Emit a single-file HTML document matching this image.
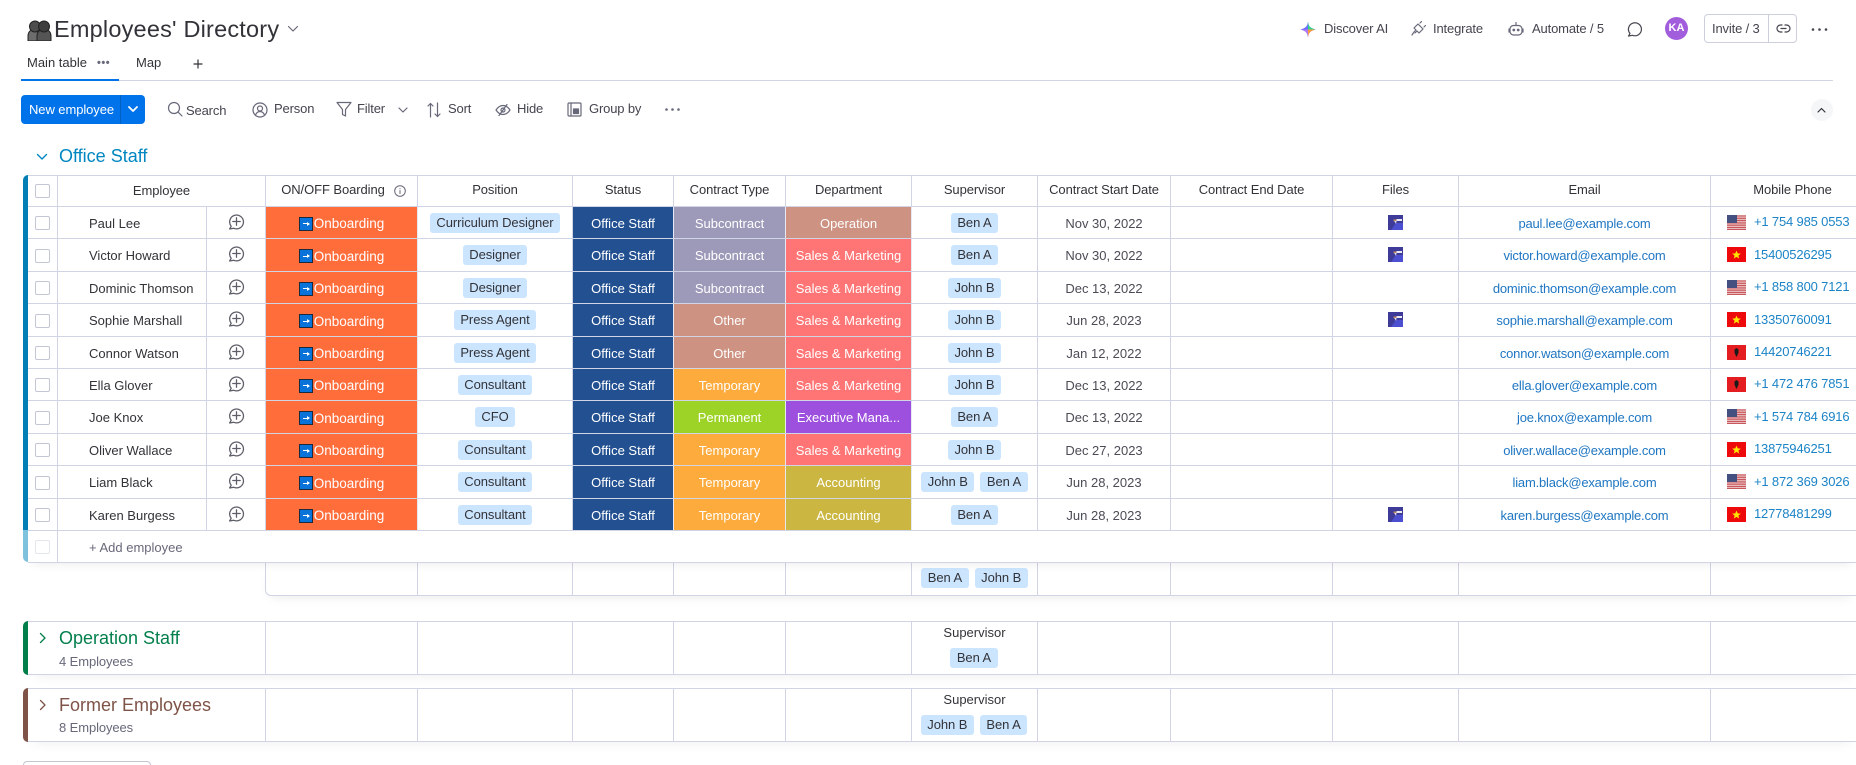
<!DOCTYPE html>
<html><head><meta charset="utf-8"><title>Employees' Directory</title>
<style>
*{box-sizing:border-box;margin:0;padding:0}
html,body{width:1856px;height:765px;overflow:hidden;background:#fff}
body{position:relative;font-family:"Liberation Sans",sans-serif;font-size:13px;color:#323338}
.t{position:absolute;white-space:nowrap;line-height:16px}
.tb{letter-spacing:-.15px;color:#44454f}
svg.i{position:absolute;fill:none;stroke:#676879;stroke-width:1.2;stroke-linecap:round;stroke-linejoin:round}
.r{position:absolute;left:28px;width:1828px;border-bottom:1px solid #d0d4e4;background:#fff}
.c{position:absolute;top:0;bottom:0;display:flex;align-items:center;justify-content:center;border-right:1px solid #d0d4e4;white-space:nowrap;padding-top:1px}
.c0{left:0;width:30px}.c1{left:30px;width:149px;justify-content:flex-start;padding-left:31px}.c2{left:179px;width:59px}
.ch{left:30px;width:208px}
.c3{left:238px;width:152px}.c4{left:390px;width:155px}.c5{left:545px;width:101px}.c6{left:646px;width:112px}.c7{left:758px;width:126px}.c8{left:884px;width:126px}.c9{left:1010px;width:133px}.c10{left:1143px;width:162px}.c11{left:1305px;width:126px}.c12{left:1431px;width:252px}.c13{left:1683px;width:145px;border-right:0;justify-content:flex-start;padding-left:16px}
.hd .c{padding-top:0;padding-bottom:3px;letter-spacing:-.08px}
.hd .c0{padding-bottom:0}
.hd .c13{justify-content:center;padding-left:18px}
.cb{display:block;width:15px;height:14px;border:1px solid #c3c6d4;border-radius:2px;background:#fff}
.w{color:#fff;border-right-color:#e6e9f2}
.on{background:#ff6d3b;font-size:13.5px;padding-top:2px}.st{background:#225091}.sub{background:#9d99b9}.oth{background:#cd9282}.tmp{background:#fdab3d}.perm{background:#9cd326}.opd{background:#cd9282}.sal{background:#ff7575}.ex{background:#9d50dd}.acc{background:#cab641}
.p{background:#cce5ff;border-radius:3px;height:20px;line-height:20px;padding:0 6.500px;margin-top:-1px;letter-spacing:-.07px}
.p+.p{margin-left:6px}
.d{color:#4b4c55}.m{color:#1f76c2;letter-spacing:-.2px}
.ph{color:#1c84c6;margin-left:8px;margin-top:-3px;letter-spacing:-.17px}
.em{width:14px;height:14px;margin-right:1px;background:#0a73d9;border:1px solid #1c2a3c;position:relative;flex:none}
.em:after{content:"";position:absolute;left:3px;right:3px;top:5.500px;height:1px;background:#fff}
.em:before{content:"";position:absolute;right:1.500px;top:4px;border-left:3px solid #fff;border-top:2px solid transparent;border-bottom:2px solid transparent}
.fl{width:19px;height:15px;flex:none;display:block;margin-top:-2px}
.f{width:15px;height:15px;display:block;margin-top:-2px}
.ic{width:17px;height:17px;display:block;margin-top:-4px;fill:none;stroke:#5d5e68;stroke-width:1.200;stroke-linecap:round;stroke-linejoin:round}
.bar{position:absolute;left:23px;width:5px}
.g{height:54px;border-top:1px solid #d0d4e4;background:#fff;box-shadow:0 6px 12px -6px rgba(0,0,0,.08)}
.s{position:absolute;left:0;right:0;text-align:center;top:3px;line-height:16px}
.pr{position:absolute;left:0;right:1px;top:26px;display:flex;justify-content:center}
.pr .p{margin-top:0}
.gt{font-size:18px;line-height:20px}
</style></head><body>

<svg style="position:absolute;left:27px;top:20px" width="25" height="21" viewBox="0 0 25 21"><path d="M8 9c-4 0-7 3-7 7v5h14v-5c0-4-3-7-7-7z" fill="#6d6d6d" stroke="#222" stroke-width="1"/><path d="M17 9c-4 0-7 3-7 7v5h14v-5c0-4-3-7-7-7z" fill="#555" stroke="#222" stroke-width="1"/><circle cx="8" cy="6.500" r="5.500" fill="#4d4d4d" stroke="#222"/><circle cx="17" cy="6.500" r="5.500" fill="#3e3e3e" stroke="#222"/></svg>
<div class="t" style="left:54px;top:14px;font-size:23.5px;line-height:30px;letter-spacing:.2px;color:#323338">Employees' Directory</div>
<svg class="i" style="left:287px;top:25px" width="12" height="8" viewBox="0 0 12 8"><path d="M1.500 1.500L6 6l4.500-4.500"/></svg>

<div class="t" style="left:27px;top:55px">Main table</div>
<div class="t" style="left:97px;top:55px;letter-spacing:.5px;font-weight:700;font-size:11px;color:#676879">•••</div>
<div class="t" style="left:136px;top:55px">Map</div>
<svg class="i" style="left:193px;top:59px;stroke:#323338" width="10" height="10" viewBox="0 0 10 10"><path d="M5 1v8M1 5h8"/></svg>
<div style="position:absolute;left:21px;top:80px;width:1812px;height:1px;background:#d0d4e4"></div>
<div style="position:absolute;left:21px;top:79px;width:98px;height:2px;background:#0073ea"></div>

<svg style="position:absolute;left:1300px;top:21px" width="16" height="17" viewBox="0 0 16 17"><path d="M8 0.500C8.500 5 10 7 15.500 8.500 10 10 8.500 12 8 16.500 7.500 12 6 10 .5 8.500 6 7 7.500 5 8 .5z" fill="#6c6cff"/><path d="M8 .5C8.500 5 10 7 15.500 8.500L8 8.500z" fill="#33d58e"/><path d="M15.500 8.500C10 10 8.500 12 8 16.500L8 8.500z" fill="#ff9a3d"/><path d="M8 16.500C7.500 12 6 10 .5 8.500L8 8.500z" fill="#b07cf0"/></svg>
<div class="t tb" style="left:1324px;top:21px">Discover AI</div>
<svg class="i" style="left:1411px;top:21px" width="15" height="16" viewBox="0 0 15 16"><path d="M3 11l2-2-2-2 4-4 5 5-4 4-2-2-2 2M1 14l2-3M9 2l1.500-1.500M13 6l1.500-1.500"/></svg>
<div class="t tb" style="left:1433px;top:21px">Integrate</div>
<svg class="i" style="left:1508px;top:21px" width="16" height="16" viewBox="0 0 16 16"><rect x="2" y="4.500" width="12" height="9.500" rx="3.500"/><path d="M8 4.500V1.500M1 8v3M15 8v3"/><circle cx="5.800" cy="9" r=".8" fill="#676879"/><circle cx="10.200" cy="9" r=".8" fill="#676879"/></svg>
<div class="t tb" style="left:1532px;top:21px">Automate / 5</div>
<svg class="i" style="left:1627px;top:21px" width="16" height="16" viewBox="0 0 16 16"><path d="M3 12.500A6.500 6.500 0 1 1 5.500 14.300L1.500 15z" stroke="#44454f"/></svg>
<div class="t" style="left:1665px;top:17px;width:23px;height:23px;border-radius:50%;background:#a25ddc;color:#fff;text-align:center;line-height:23px;font-size:11px;font-weight:700">KA</div>
<div style="position:absolute;left:1704px;top:14px;width:93px;height:29px;border:1px solid #cdd0dc;border-radius:4px"></div>
<div style="position:absolute;left:1768px;top:14px;width:1px;height:29px;background:#cdd0dc"></div>
<div class="t tb" style="left:1712px;top:21px">Invite / 3</div>
<svg class="i" style="left:1776px;top:23px;stroke:#44454f" width="15" height="11" viewBox="0 0 15 11"><path d="M6 2H4.500a3.500 3.500 0 0 0 0 7H6M9 2h1.500a3.500 3.500 0 0 1 0 7H9M5 5.500h5"/></svg>
<svg style="position:absolute;left:1811px;top:27px" width="17" height="5" viewBox="0 0 17 5" fill="#44454f"><circle cx="2" cy="2.500" r="1.300"/><circle cx="8.500" cy="2.500" r="1.300"/><circle cx="15" cy="2.500" r="1.300"/></svg>

<div style="position:absolute;left:21px;top:95px;width:124px;height:29px;border-radius:4px;background:#0073ea"></div>
<div style="position:absolute;left:120px;top:95px;width:1px;height:29px;background:#0060c2"></div>
<div class="t" style="left:29px;top:102px;color:#fff;letter-spacing:-.08px">New employee</div>
<svg class="i" style="left:128px;top:106px;stroke:#fff;stroke-width:1.800" width="10" height="7" viewBox="0 0 10 7"><path d="M1 1l4 4 4-4"/></svg>

<svg class="i" style="left:167px;top:101px" width="16" height="16" viewBox="0 0 16 16"><circle cx="7" cy="7" r="5.500"/><path d="M11 11l4 4"/></svg>
<div class="t tb" style="left:186px;top:103px">Search</div>
<svg class="i" style="left:252px;top:102px" width="16" height="16" viewBox="0 0 16 16"><circle cx="8" cy="8" r="7"/><circle cx="8" cy="6.500" r="2.500"/><path d="M3.500 13c1-2.500 2.500-3.500 4.500-3.500s3.500 1 4.500 3.500"/></svg>
<div class="t tb" style="left:274px;top:101px">Person</div>
<svg class="i" style="left:336px;top:101px" width="16" height="16" viewBox="0 0 16 16"><path d="M1 1.500h14L9.500 8.500V15l-3-1.500V8.500z"/></svg>
<div class="t tb" style="left:357px;top:101px">Filter</div>
<svg class="i" style="left:398px;top:107px" width="10" height="7" viewBox="0 0 10 7"><path d="M1 1l4 4 4-4"/></svg>
<svg class="i" style="left:427px;top:102px" width="14" height="16" viewBox="0 0 14 16"><path d="M3.500 15V1.500M1 4l2.500-2.500L6 4M10.500 1v13.500M8 12l2.500 2.500L13 12"/></svg>
<div class="t tb" style="left:448px;top:101px">Sort</div>
<svg class="i" style="left:495px;top:104px" width="16" height="12" viewBox="0 0 16 12"><path d="M1 6c2-3 4.500-4.500 7-4.500S13 3 15 6c-2 3-4.500 4.500-7 4.500S3 9 1 6zM12 .5L4 11.500"/><circle cx="8" cy="6" r="2"/></svg>
<div class="t tb" style="left:517px;top:101px">Hide</div>
<svg class="i" style="left:567px;top:102px" width="15" height="15" viewBox="0 0 15 15"><rect x="1" y="1" width="13" height="13" rx="1"/><path d="M4 1v13"/><rect x="6.500" y="7" width="5" height="4.500" fill="#676879"/></svg>
<div class="t tb" style="left:589px;top:101px">Group by</div>
<svg style="position:absolute;left:664px;top:107px" width="17" height="5" viewBox="0 0 17 5" fill="#676879"><circle cx="2.500" cy="2.500" r="1.300"/><circle cx="8.500" cy="2.500" r="1.300"/><circle cx="14.500" cy="2.500" r="1.300"/></svg>

<div style="position:absolute;left:1811px;top:99px;width:22px;height:22px;border-radius:50%;background:#f5f6f8"></div>
<svg class="i" style="left:1817px;top:107px;stroke:#323338" width="9" height="6" viewBox="0 0 9 6"><path d="M1 5l3.500-3.500L8 5"/></svg>

<svg class="i" style="left:36px;top:153px;stroke:#0086c0;stroke-width:1.400" width="12" height="8" viewBox="0 0 12 8"><path d="M1.500 1.500L6 6l4.500-4.500"/></svg>
<div class="t gt" style="left:59px;top:146px;color:#0086c0">Office Staff</div>

<div class="bar" style="top:175px;height:355px;background:#037fb5;border-radius:6px 0 0 0"></div>
<div class="bar" style="top:530px;height:32px;background:#7fc2de;border-radius:0 0 0 6px"></div>

<svg width="0" height="0" style="position:absolute">
<symbol id="cm" viewBox="0 0 16 16"><path d="M3 12.500A6.500 6.500 0 1 1 5.500 14.400L1.500 15z"/><path d="M8 4.500v7M4.500 8h7"/></symbol>
<symbol id="file" viewBox="0 0 15 15"><rect width="15" height="15" fill="#3e3c98"/><path d="M3 15l5-7h7v7z" fill="#4c4fd0"/><path d="M6 6l3-2h5v2H8.500L8 9 7 7z" fill="#e9e9f5"/><rect x="5.500" y="4.500" width="3" height="1.500" fill="#c08a5a"/></symbol>
<symbol id="us" viewBox="0 0 19 15"><rect width="19" height="15" fill="#e8bcbc"/><path d="M0 1h19M0 3.300h19M0 5.600h19M0 7.900h19M0 10.200h19M0 12.500h19M0 14.500h19" stroke="#c9585e" stroke-width="1.100"/><rect width="10" height="8" fill="#44507f"/></symbol>
<symbol id="vn" viewBox="0 0 19 15"><rect width="19" height="15" fill="#ee0a0a"/><path d="M9.500 3.500l1.200 2.900 3.100.2-2.400 2 .8 3-2.700-1.700-2.700 1.700.8-3-2.400-2 3.100-.2z" fill="#ffe600"/></symbol>
<symbol id="al" viewBox="0 0 19 15"><rect width="19" height="15" fill="#e41e20"/><path d="M9.500 3l2 1.500v3L10.300 10.500l-.8 1.500-.8-1.500L7.500 7.500v-3z" fill="#1a1a1a"/></symbol>
</svg>

<!-- header -->
<div class="r hd" style="top:175px;height:32px;border-top:1px solid #d0d4e4">
<div class="c c0"><b class="cb"></b></div><div class="c ch" style="padding-bottom:1px">Employee</div>
<div class="c c3" style="padding-right:17px">ON/OFF Boarding</div><div class="c c4">Position</div><div class="c c5">Status</div><div class="c c6">Contract Type</div><div class="c c7">Department</div><div class="c c8">Supervisor</div><div class="c c9">Contract Start Date</div><div class="c c10">Contract End Date</div><div class="c c11">Files</div><div class="c c12">Email</div><div class="c c13">Mobile Phone</div>
</div>
<svg class="i" style="left:394px;top:185px;stroke-width:1" width="12" height="12" viewBox="0 0 12 12"><circle cx="6" cy="6" r="5.300"/><path d="M6 5.500v3M6 3.500v.3"/></svg>

<div class="r" style="top:207px;height:32px"><div class="c c0"><b class="cb"></b></div><div class="c c1">Paul Lee</div><div class="c c2"><svg class="ic"><use href="#cm"/></svg></div><div class="c c3 w on"><span class="em"></span>Onboarding</div><div class="c c4"><span class="p">Curriculum Designer</span></div><div class="c c5 w st">Office Staff</div><div class="c c6 w sub">Subcontract</div><div class="c c7 w opd">Operation</div><div class="c c8"><span class="p">Ben A</span></div><div class="c c9 d">Nov 30, 2022</div><div class="c c10"></div><div class="c c11"><svg class="f"><use href="#file"/></svg></div><div class="c c12 m">paul.lee@example.com</div><div class="c c13"><svg class="fl"><use href="#us"/></svg><span class="ph">+1 754 985 0553</span></div></div>

<div class="r" style="top:239px;height:33px"><div class="c c0"><b class="cb"></b></div><div class="c c1">Victor Howard</div><div class="c c2"><svg class="ic"><use href="#cm"/></svg></div><div class="c c3 w on"><span class="em"></span>Onboarding</div><div class="c c4"><span class="p">Designer</span></div><div class="c c5 w st">Office Staff</div><div class="c c6 w sub">Subcontract</div><div class="c c7 w sal">Sales &amp; Marketing</div><div class="c c8"><span class="p">Ben A</span></div><div class="c c9 d">Nov 30, 2022</div><div class="c c10"></div><div class="c c11"><svg class="f"><use href="#file"/></svg></div><div class="c c12 m">victor.howard@example.com</div><div class="c c13"><svg class="fl"><use href="#vn"/></svg><span class="ph">15400526295</span></div></div>

<div class="r" style="top:272px;height:32px"><div class="c c0"><b class="cb"></b></div><div class="c c1">Dominic Thomson</div><div class="c c2"><svg class="ic"><use href="#cm"/></svg></div><div class="c c3 w on"><span class="em"></span>Onboarding</div><div class="c c4"><span class="p">Designer</span></div><div class="c c5 w st">Office Staff</div><div class="c c6 w sub">Subcontract</div><div class="c c7 w sal">Sales &amp; Marketing</div><div class="c c8"><span class="p">John B</span></div><div class="c c9 d">Dec 13, 2022</div><div class="c c10"></div><div class="c c11"></div><div class="c c12 m">dominic.thomson@example.com</div><div class="c c13"><svg class="fl"><use href="#us"/></svg><span class="ph">+1 858 800 7121</span></div></div>

<div class="r" style="top:304px;height:33px"><div class="c c0"><b class="cb"></b></div><div class="c c1">Sophie Marshall</div><div class="c c2"><svg class="ic"><use href="#cm"/></svg></div><div class="c c3 w on"><span class="em"></span>Onboarding</div><div class="c c4"><span class="p">Press Agent</span></div><div class="c c5 w st">Office Staff</div><div class="c c6 w oth">Other</div><div class="c c7 w sal">Sales &amp; Marketing</div><div class="c c8"><span class="p">John B</span></div><div class="c c9 d">Jun 28, 2023</div><div class="c c10"></div><div class="c c11"><svg class="f"><use href="#file"/></svg></div><div class="c c12 m">sophie.marshall@example.com</div><div class="c c13"><svg class="fl"><use href="#vn"/></svg><span class="ph">13350760091</span></div></div>

<div class="r" style="top:337px;height:32px"><div class="c c0"><b class="cb"></b></div><div class="c c1">Connor Watson</div><div class="c c2"><svg class="ic"><use href="#cm"/></svg></div><div class="c c3 w on"><span class="em"></span>Onboarding</div><div class="c c4"><span class="p">Press Agent</span></div><div class="c c5 w st">Office Staff</div><div class="c c6 w oth">Other</div><div class="c c7 w sal">Sales &amp; Marketing</div><div class="c c8"><span class="p">John B</span></div><div class="c c9 d">Jan 12, 2022</div><div class="c c10"></div><div class="c c11"></div><div class="c c12 m">connor.watson@example.com</div><div class="c c13"><svg class="fl"><use href="#al"/></svg><span class="ph">14420746221</span></div></div>

<div class="r" style="top:369px;height:32px"><div class="c c0"><b class="cb"></b></div><div class="c c1">Ella Glover</div><div class="c c2"><svg class="ic"><use href="#cm"/></svg></div><div class="c c3 w on"><span class="em"></span>Onboarding</div><div class="c c4"><span class="p">Consultant</span></div><div class="c c5 w st">Office Staff</div><div class="c c6 w tmp">Temporary</div><div class="c c7 w sal">Sales &amp; Marketing</div><div class="c c8"><span class="p">John B</span></div><div class="c c9 d">Dec 13, 2022</div><div class="c c10"></div><div class="c c11"></div><div class="c c12 m">ella.glover@example.com</div><div class="c c13"><svg class="fl"><use href="#al"/></svg><span class="ph">+1 472 476 7851</span></div></div>

<div class="r" style="top:401px;height:33px"><div class="c c0"><b class="cb"></b></div><div class="c c1">Joe Knox</div><div class="c c2"><svg class="ic"><use href="#cm"/></svg></div><div class="c c3 w on"><span class="em"></span>Onboarding</div><div class="c c4"><span class="p">CFO</span></div><div class="c c5 w st">Office Staff</div><div class="c c6 w perm">Permanent</div><div class="c c7 w ex">Executive Mana...</div><div class="c c8"><span class="p">Ben A</span></div><div class="c c9 d">Dec 13, 2022</div><div class="c c10"></div><div class="c c11"></div><div class="c c12 m">joe.knox@example.com</div><div class="c c13"><svg class="fl"><use href="#us"/></svg><span class="ph">+1 574 784 6916</span></div></div>

<div class="r" style="top:434px;height:32px"><div class="c c0"><b class="cb"></b></div><div class="c c1">Oliver Wallace</div><div class="c c2"><svg class="ic"><use href="#cm"/></svg></div><div class="c c3 w on"><span class="em"></span>Onboarding</div><div class="c c4"><span class="p">Consultant</span></div><div class="c c5 w st">Office Staff</div><div class="c c6 w tmp">Temporary</div><div class="c c7 w sal">Sales &amp; Marketing</div><div class="c c8"><span class="p">John B</span></div><div class="c c9 d">Dec 27, 2023</div><div class="c c10"></div><div class="c c11"></div><div class="c c12 m">oliver.wallace@example.com</div><div class="c c13"><svg class="fl"><use href="#vn"/></svg><span class="ph">13875946251</span></div></div>

<div class="r" style="top:466px;height:33px"><div class="c c0"><b class="cb"></b></div><div class="c c1">Liam Black</div><div class="c c2"><svg class="ic"><use href="#cm"/></svg></div><div class="c c3 w on"><span class="em"></span>Onboarding</div><div class="c c4"><span class="p">Consultant</span></div><div class="c c5 w st">Office Staff</div><div class="c c6 w tmp">Temporary</div><div class="c c7 w acc">Accounting</div><div class="c c8"><span class="p">John B</span><span class="p">Ben A</span></div><div class="c c9 d">Jun 28, 2023</div><div class="c c10"></div><div class="c c11"></div><div class="c c12 m">liam.black@example.com</div><div class="c c13"><svg class="fl"><use href="#us"/></svg><span class="ph">+1 872 369 3026</span></div></div>

<div class="r" style="top:499px;height:32px"><div class="c c0"><b class="cb"></b></div><div class="c c1">Karen Burgess</div><div class="c c2"><svg class="ic"><use href="#cm"/></svg></div><div class="c c3 w on"><span class="em"></span>Onboarding</div><div class="c c4"><span class="p">Consultant</span></div><div class="c c5 w st">Office Staff</div><div class="c c6 w tmp">Temporary</div><div class="c c7 w acc">Accounting</div><div class="c c8"><span class="p">Ben A</span></div><div class="c c9 d">Jun 28, 2023</div><div class="c c10"></div><div class="c c11"><svg class="f"><use href="#file"/></svg></div><div class="c c12 m">karen.burgess@example.com</div><div class="c c13"><svg class="fl"><use href="#vn"/></svg><span class="ph">12778481299</span></div></div>

<!-- summary -->
<div class="r" style="left:265px;width:1591px;top:563px;height:33px;border-radius:0 0 0 6px;border-left:1px solid #d0d4e4;box-shadow:0 6px 12px -6px rgba(0,0,0,.1)">
<div class="c" style="left:151px;width:1px"></div><div class="c" style="left:306px;width:1px"></div><div class="c" style="left:407px;width:1px"></div><div class="c" style="left:519px;width:1px"></div>
<div class="c" style="left:645px;width:1px"></div><div class="c" style="left:771px;width:1px"></div><div class="c" style="left:904px;width:1px"></div><div class="c" style="left:1066px;width:1px"></div><div class="c" style="left:1192px;width:1px"></div><div class="c" style="left:1444px;width:1px"></div>
<div style="position:absolute;left:646px;width:125px;top:0;bottom:0;display:flex;align-items:center;justify-content:center;padding-bottom:2px"><span class="p" style="margin:0">Ben A</span><span class="p" style="margin:0 0 0 6px">John B</span></div>
</div>
<div class="r" style="top:531px;height:32px;box-shadow:0 6px 10px -6px rgba(0,0,0,.1)">
<div class="c c0"><b class="cb" style="border-color:#e4e6ef"></b></div>
<div class="t" style="left:61px;top:9px;color:#676879">+ Add employee</div>
</div>

<!-- Operation Staff -->
<div class="bar" style="top:621px;height:54px;background:#037f4c;border-radius:6px 0 0 6px"></div>
<div class="r g" style="top:621px">
<div class="c c3"></div><div class="c c4"></div><div class="c c5"></div><div class="c c6"></div><div class="c c7"></div><div class="c c8"><div class="s">Supervisor</div><div class="pr"><span class="p">Ben A</span></div></div><div class="c c9"></div><div class="c c10"></div><div class="c c11"></div><div class="c c12"></div><div class="c c13"></div>
<div style="position:absolute;left:237px;top:0;bottom:0;width:1px;background:#d0d4e4"></div>
</div>
<svg class="i" style="left:39px;top:632px;stroke:#037f4c;stroke-width:1.300" width="8" height="12" viewBox="0 0 8 12"><path d="M1.500 1.500L6 6l-4.500 4.500"/></svg>
<div class="t gt" style="left:59px;top:628px;color:#037f4c">Operation Staff</div>
<div class="t" style="left:59px;top:654px;color:#676879;letter-spacing:-.1px">4 Employees</div>

<!-- Former Employees -->
<div class="bar" style="top:688px;height:54px;background:#7f5347;border-radius:6px 0 0 6px"></div>
<div class="r g" style="top:688px">
<div class="c c3"></div><div class="c c4"></div><div class="c c5"></div><div class="c c6"></div><div class="c c7"></div><div class="c c8"><div class="s">Supervisor</div><div class="pr"><span class="p">John B</span><span class="p">Ben A</span></div></div><div class="c c9"></div><div class="c c10"></div><div class="c c11"></div><div class="c c12"></div><div class="c c13"></div>
<div style="position:absolute;left:237px;top:0;bottom:0;width:1px;background:#d0d4e4"></div>
</div>
<svg class="i" style="left:39px;top:699px;stroke:#7f5347;stroke-width:1.300" width="8" height="12" viewBox="0 0 8 12"><path d="M1.500 1.500L6 6l-4.500 4.500"/></svg>
<div class="t gt" style="left:59px;top:695px;color:#7f5347">Former Employees</div>
<div class="t" style="left:59px;top:720px;color:#676879;letter-spacing:-.1px">8 Employees</div>

<div style="position:absolute;left:23px;top:761px;width:128px;height:20px;border:1px solid #c3c6d4;border-radius:4px"></div>
</body></html>
